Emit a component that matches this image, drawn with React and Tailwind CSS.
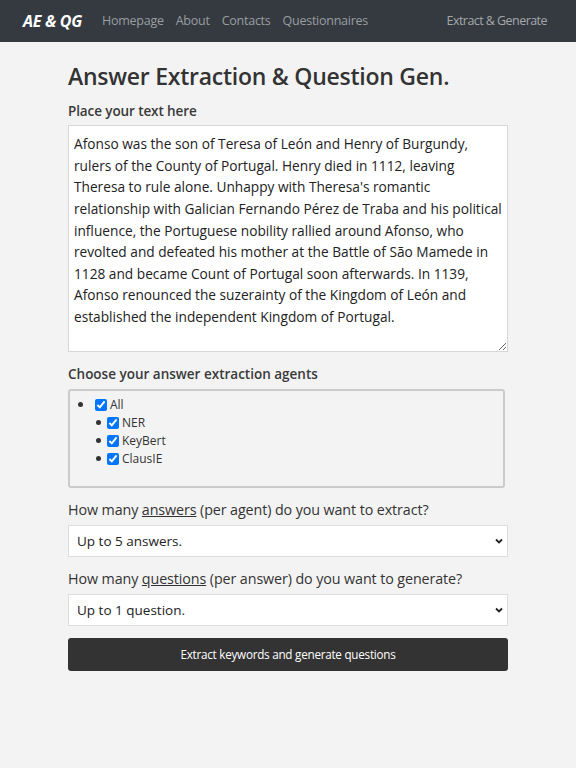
import React from "react";

const TEXT =
  "Afonso was the son of Teresa of León and Henry of Burgundy, rulers of the County of Portugal. Henry died in 1112, leaving Theresa to rule alone. Unhappy with Theresa's romantic relationship with Galician Fernando Pérez de Traba and his political influence, the Portuguese nobility rallied around Afonso, who revolted and defeated his mother at the Battle of São Mamede in 1128 and became Count of Portugal soon afterwards. In 1139, Afonso renounced the suzerainty of the Kingdom of León and established the independent Kingdom of Portugal.";

function Chevron() {
  return (
    <svg
      className="pointer-events-none absolute right-[5px] top-1/2 -translate-y-1/2"
      width="8"
      height="6"
      viewBox="0 0 8 6"
    >
      <path d="M1 1.5 L4 4.5 L7 1.5" fill="none" stroke="#222" strokeWidth="1.8" />
    </svg>
  );
}

function Row({ label, indent }) {
  return (
    <div className={"flex h-[18px] items-center " + (indent ? "pl-[26px]" : "pl-[8px]")}>
      <span className="h-[5px] w-[5px] rounded-full bg-[#333]" />
      <input
        type="checkbox"
        defaultChecked
        className={"m-0 h-[12px] w-[12px] accent-[#0075ff] " + (indent ? "ml-[6px]" : "ml-[12px]")}
      />
      <span className="ml-[3px]">{label}</span>
    </div>
  );
}

export default function App() {
  return (
    <div
      className="min-h-[768px] bg-[#f3f3f3] text-[#333]"
      style={{ fontFamily: '"Open Sans", "Noto Sans", sans-serif' }}
    >
      <nav className="flex h-[42px] items-center bg-[#343a40] pl-[23px] pr-[29px]">
        <span className="text-[16px] font-bold italic text-white tracking-[-0.3px]">AE &amp; QG</span>
        <div className="ml-[20px] flex gap-[12px] text-[12.5px] text-[#9a9da1] tracking-[-0.25px]">
          <span>Homepage</span>
          <span>About</span>
          <span>Contacts</span>
          <span>Questionnaires</span>
        </div>
        <span className="ml-auto text-[12.5px] text-[#a4a7ab] tracking-[-0.55px]">Extract &amp; Generate</span>
      </nav>

      <main className="mx-auto w-[440px] pt-[18px]">
        <h1 className="text-[23px] font-semibold leading-[32px] tracking-[-0.25px] text-[#333]">
          Answer Extraction &amp; Question Gen.
        </h1>
        <div className="mt-[9px] text-[13.5px] font-semibold tracking-[-0.1px] text-[#3a3a3a]">Place your text here</div>
        <textarea
          defaultValue={TEXT}
          className="mt-[4px] block h-[227px] w-full resize-y border border-[#d6d6d6] bg-white px-[5px] py-[7px] text-[13.7px] leading-[21.6px] text-[#222] outline-none"
        />

        <div className="mt-[12px] text-[13.5px] font-semibold text-[#3a3a3a]">
          Choose your answer extraction agents
        </div>
        <div className="mt-[4px] h-[99px] w-[437px] rounded-[3px] border-2 border-[#cbcbcb] pt-[5px] text-[12px] leading-[18px] text-[#333]">
          <Row label="All" />
          <Row label="NER" indent />
          <Row label="KeyBert" indent />
          <Row label="ClausIE" indent />
        </div>

        <div className="mt-[11px] text-[14.3px] tracking-[-0.1px] text-[#333]">
          How many <span className="underline">answers</span> (per agent) do you want to extract?
        </div>
        <div className="relative mt-[5px]">
          <select className="block h-[32px] w-full appearance-none border border-[#dcdcdc] bg-white px-[8px] text-[13.5px] text-[#222] outline-none">
            <option>Up to 5 answers.</option>
          </select>
          <Chevron />
        </div>

        <div className="mt-[11px] text-[14.3px] tracking-[-0.1px] text-[#333]">
          How many <span className="underline">questions</span> (per answer) do you want to generate?
        </div>
        <div className="relative mt-[5px]">
          <select className="block h-[32px] w-full appearance-none border border-[#dcdcdc] bg-white px-[8px] text-[13.5px] text-[#222] outline-none">
            <option>Up to 1 question.</option>
          </select>
          <Chevron />
        </div>

        <button className="mt-[12px] flex h-[33px] w-full items-center justify-center rounded-[3px] bg-[#333333] text-[11.7px] tracking-[-0.25px] text-white">
          Extract keywords and generate questions
        </button>
      </main>
    </div>
  );
}
